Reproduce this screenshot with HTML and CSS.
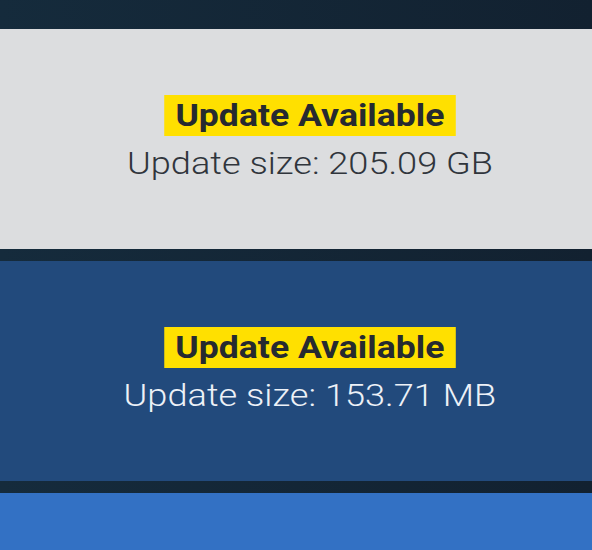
FILE: index.html
```html
<!DOCTYPE html>
<html lang="en">
<head>
    <meta charset="UTF-8">
    <title>Updates</title>
    <link rel="stylesheet" href="styles.css">
</head>
<body>
<div class="list">
    <div class="item light">
        <div class="info">
            <div class="badge">Update Available</div>
            <div class="size">Update size: 205.09 GB</div>
        </div>
    </div>
    <div class="item dark">
        <div class="info">
            <div class="badge">Update Available</div>
            <div class="size">Update size: 153.71 MB</div>
        </div>
    </div>
    <div class="item bright"></div>
</div>
</body>
</html>
```

FILE: styles.css
```css
*{
    margin: 0;
    padding: 0;
}
body{
    background: linear-gradient(90deg, #152b3c, #122130);
    font-family: Roboto, "Liberation Sans", sans-serif;
    height: 550px;
    overflow: hidden;
}
.list{
    display: flex;
    flex-direction: column;
    gap: 12px;
    padding-top: 29px;
}
.item{
    height: 220px;
    display: flex;
    align-items: center;
    justify-content: center;
    flex-shrink: 0;
    padding: 0 0 2px 27px;
    box-sizing: border-box;
}
.info{
    display: flex;
    flex-direction: column;
    align-items: center;
    transform: scaleX(1.13);
}
.light{
    background: #dcdddf;
    color: #30353c;
}
.dark{
    background: #224a7c;
    color: #edf1f7;
}
.bright{
    background: #3371c4;
}
.badge{
    background: #ffe000;
    color: #262a30;
    font-weight: 700;
    font-size: 31.5px;
    line-height: 41px;
    padding: 0 10px;
}
.size{
    font-weight: 300;
    font-size: 32px;
    line-height: 38px;
    margin-top: 8px;
}
```
